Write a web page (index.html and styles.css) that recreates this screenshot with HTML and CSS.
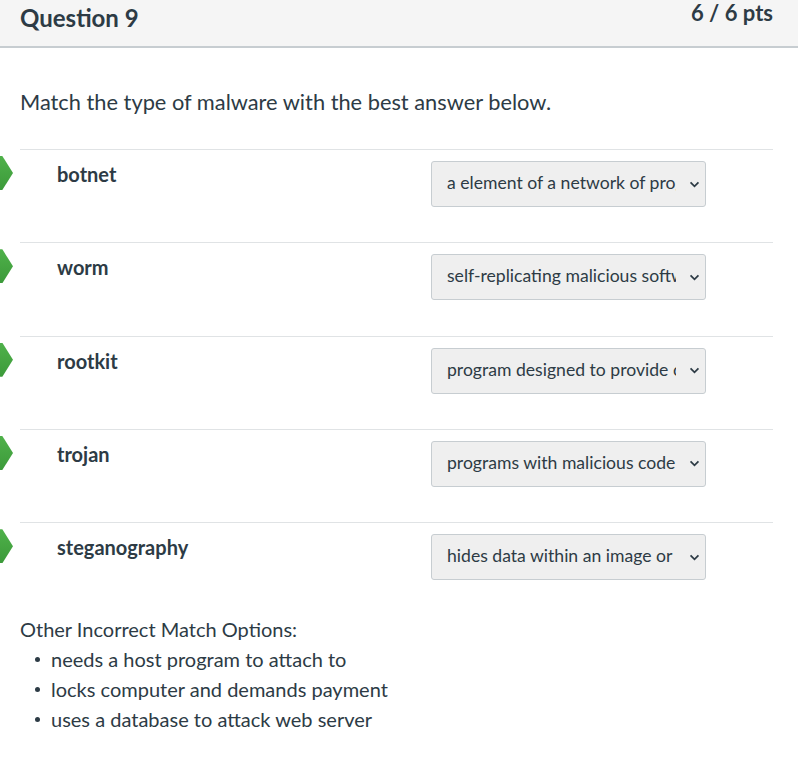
FILE: index.html
```html
<!DOCTYPE html>
<html>
<head>
<meta charset="utf-8">
<link rel="stylesheet" href="styles.css">
</head>
<body>
<div class="header">
  <h2 class="qtitle">Question 9</h2>
  <div class="pts">6 / 6 pts</div>
</div>
<div class="content">
  <p class="prompt">Match the type of malware with the best answer below.</p>
  <div class="rows">
    <div class="row">
      <span class="arrow"></span>
      <div class="label">botnet</div>
      <div class="select"><span class="sel-text">a element of a network of programs that are used in a coordinated attack</span><svg class="chev" viewBox="0 0 12 8" width="11" height="7"><path d="M1.5 1.5 L6 6 L10.5 1.5" fill="none" stroke="#2d3b45" stroke-width="2"/></svg></div>
    </div>
    <div class="row">
      <span class="arrow"></span>
      <div class="label">worm</div>
      <div class="select"><span class="sel-text">self-replicating malicious software</span><svg class="chev" viewBox="0 0 12 8" width="11" height="7"><path d="M1.5 1.5 L6 6 L10.5 1.5" fill="none" stroke="#2d3b45" stroke-width="2"/></svg></div>
    </div>
    <div class="row">
      <span class="arrow"></span>
      <div class="label">rootkit</div>
      <div class="select"><span class="sel-text">program designed to provide continued privileged access</span><svg class="chev" viewBox="0 0 12 8" width="11" height="7"><path d="M1.5 1.5 L6 6 L10.5 1.5" fill="none" stroke="#2d3b45" stroke-width="2"/></svg></div>
    </div>
    <div class="row">
      <span class="arrow"></span>
      <div class="label">trojan</div>
      <div class="select"><span class="sel-text">programs with malicious code hidden inside</span><svg class="chev" viewBox="0 0 12 8" width="11" height="7"><path d="M1.5 1.5 L6 6 L10.5 1.5" fill="none" stroke="#2d3b45" stroke-width="2"/></svg></div>
    </div>
    <div class="row">
      <span class="arrow"></span>
      <div class="label">steganography</div>
      <div class="select"><span class="sel-text">hides data within an image or other file</span><svg class="chev" viewBox="0 0 12 8" width="11" height="7"><path d="M1.5 1.5 L6 6 L10.5 1.5" fill="none" stroke="#2d3b45" stroke-width="2"/></svg></div>
    </div>
  </div>
  <div class="other">
    <div class="other-title">Other Incorrect Match Options:</div>
    <ul class="other-list">
      <li>needs a host program to attach to</li>
      <li>locks computer and demands payment</li>
      <li>uses a database to attack web server</li>
    </ul>
  </div>
</div>
</body>
</html>
```
FILE: styles.css
```css
html, body {
  margin: 0;
  padding: 0;
  background: #ffffff;
}
body {
  font-family: Lato, "Open Sans", sans-serif;
  color: #2d3b45;
  width: 798px;
}
.header {
  background: #f5f5f5;
  height: 46px;
  border-bottom: 2px solid #c7cdd1;
  display: flex;
  justify-content: space-between;
  padding: 0 25px 0 20px;
  box-sizing: content-box;
}
.qtitle {
  margin: 0;
  font-size: 24px;
  font-weight: 700;
  line-height: 36px;
}
.pts {
  font-size: 22px;
  line-height: 25px;
  font-weight: 700;
  color: #2d3b45;
}
.content {
  padding: 0 25px 0 20px;
}
.prompt {
  margin: 39px 0 32px 0;
  font-size: 21.8px;
  line-height: 30px;
}
.row {
  position: relative;
  height: 93.33px;
  box-sizing: border-box;
  border-top: 1px solid #e0e3e5;
  display: flex;
  align-items: flex-start;
}
.arrow {
  position: absolute;
  left: -20px;
  top: 6px;
  width: 13px;
  height: 34px;
  background: linear-gradient(#4fb14a, #3c9a3a);
  clip-path: polygon(0 0, 18% 0, 100% 50%, 18% 100%, 0 100%);
}
.label {
  margin-left: 37px;
  width: 374px;
  padding-top: 11px;
  font-size: 20px;
  line-height: 26px;
  font-weight: 700;
}
.select {
  margin-top: 11px;
  width: 275px;
  height: 46px;
  box-sizing: border-box;
  border: 1px solid #c7cdd1;
  border-radius: 3px;
  background: #efefef;
  display: flex;
  align-items: center;
  padding-left: 15px;
}
.sel-text {
  width: 229px;
  overflow: hidden;
  white-space: nowrap;
  font-size: 17.6px;
  line-height: 24px;
  margin-top: -2px;
}
.chev {
  margin-left: 13px;
}
.other {
  font-size: 20px;
  line-height: 30px;
  margin-top: -2px;
}
.other-list {
  margin: 0;
  padding-left: 31px;
  list-style: none;
}
.other-list li {
  position: relative;
}
.other-list li::before {
  content: "";
  position: absolute;
  left: -16px;
  top: 13px;
  width: 5px;
  height: 5px;
  border-radius: 50%;
  background: #2d3b45;
}
```
